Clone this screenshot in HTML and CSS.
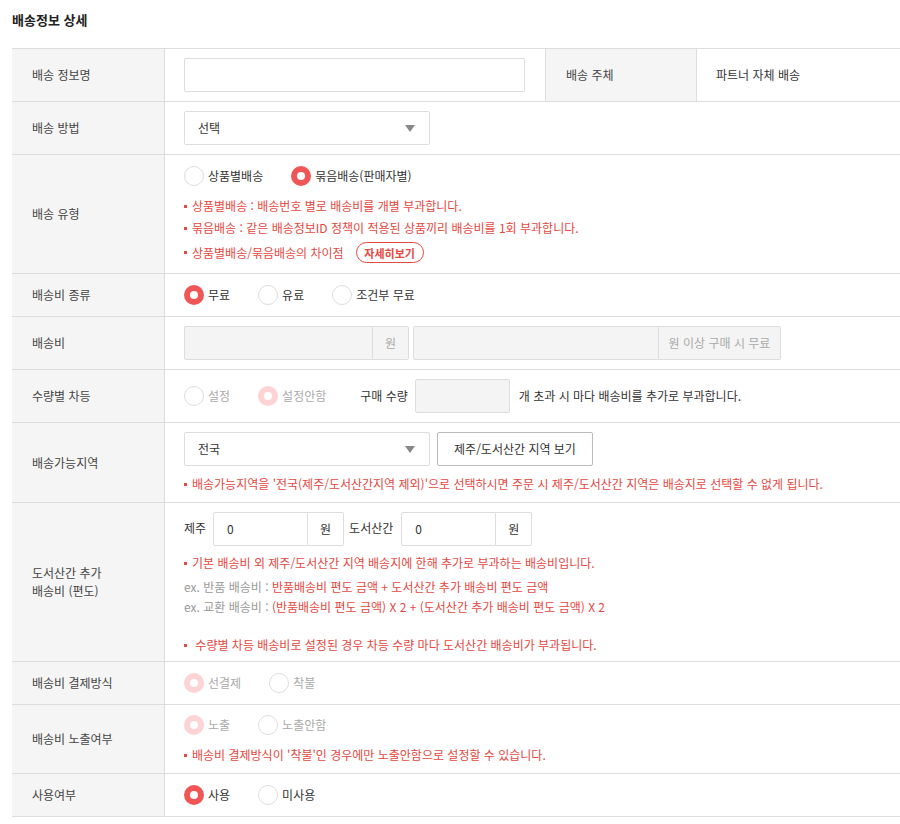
FILE: index.html
```html
<!DOCTYPE html>
<html lang="ko">
<head>
<meta charset="utf-8">
<title>배송정보 상세</title>
<link rel="stylesheet" href="styles.css">
</head>
<body>
<div class="page">
  <h2 class="title">배송정보 상세</h2>
  <div class="form">
    <!-- row 1 -->
    <div class="lbl">배송 정보명</div>
    <div class="val">
      <div class="input w-name"></div>
    </div>
    <div class="lbl lbl2">배송 주체</div>
    <div class="val text-only">파트너 자체 배송</div>

    <!-- row 2 -->
    <div class="lbl">배송 방법</div>
    <div class="val span">
      <div class="select w-select"><span>선택</span><i class="arrow"></i></div>
    </div>

    <!-- row 3 -->
    <div class="lbl">배송 유형</div>
    <div class="val span r-type">
      <div class="radios">
        <label class="opt"><span class="radio"></span>상품별배송</label>
        <label class="opt"><span class="radio on"></span>묶음배송(판매자별)</label>
      </div>
      <p class="note n1"><i class="dot"></i>상품별배송 : 배송번호 별로 배송비를 개별 부과합니다.</p>
      <p class="note n2"><i class="dot"></i>묶음배송 : 같은 배송정보ID 정책이 적용된 상품끼리 배송비를 1회 부과합니다.</p>
      <p class="note n3"><i class="dot"></i>상품별배송/묶음배송의 차이점 <span class="more">자세히보기</span></p>
    </div>

    <!-- row 4 -->
    <div class="lbl">배송비 종류</div>
    <div class="val span r-radio">
      <div class="radios">
        <label class="opt"><span class="radio on"></span>무료</label>
        <label class="opt"><span class="radio"></span>유료</label>
        <label class="opt"><span class="radio"></span>조건부 무료</label>
      </div>
    </div>

    <!-- row 5 -->
    <div class="lbl">배송비</div>
    <div class="val span">
      <div class="inline">
        <div class="group">
          <div class="input dis w-fee"></div><div class="addon dis w-won">원</div>
        </div>
        <div class="group">
          <div class="input dis w-fee2"></div><div class="addon dis w-free">원 이상 구매 시 무료</div>
        </div>
      </div>
    </div>

    <!-- row 6 -->
    <div class="lbl">수량별 차등</div>
    <div class="val span">
      <div class="inline">
        <label class="opt dim"><span class="radio"></span>설정</label>
        <label class="opt dim"><span class="radio on-dis"></span>설정안함</label>
        <span class="qty-label">구매 수량</span>
        <div class="input dis w-qty"></div>
        <span class="qty-text">개 초과 시 마다 배송비를 추가로 부과합니다.</span>
      </div>
    </div>

    <!-- row 7 -->
    <div class="lbl">배송가능지역</div>
    <div class="val span r-area">
      <div class="inline">
        <div class="select w-select"><span>전국</span><i class="arrow"></i></div>
        <div class="btn">제주/도서산간 지역 보기</div>
      </div>
      <p class="note n-area"><i class="dot"></i>배송가능지역을 '전국(제주/도서산간지역 제외)'으로 선택하시면 주문 시 제주/도서산간 지역은 배송지로 선택할 수 없게 됩니다.</p>
    </div>

    <!-- row 8 -->
    <div class="lbl">도서산간 추가<br>배송비 (편도)</div>
    <div class="val span r-island">
      <div class="inline">
        <span class="pre">제주</span>
        <div class="group">
          <div class="input w-isl"><span>0</span></div><div class="addon w-won">원</div>
        </div>
        <span class="pre pre2">도서산간</span>
        <div class="group">
          <div class="input w-isl"><span>0</span></div><div class="addon w-won">원</div>
        </div>
      </div>
      <p class="note n-isl"><i class="dot"></i>기본 배송비 외 제주/도서산간 지역 배송지에 한해 추가로 부과하는 배송비입니다.</p>
      <div class="ex">
        <p><span class="gray">ex. 반품 배송비 : </span>반품배송비 편도 금액 + 도서산간 추가 배송비 편도 금액</p>
        <p><span class="gray">ex. 교환 배송비 : </span>(반품배송비 편도 금액) X 2 + (도서산간 추가 배송비 편도 금액) X 2</p>
      </div>
      <p class="note n-last"><i class="dot"></i>&nbsp;수량별 차등 배송비로 설정된 경우 차등 수량 마다 도서산간 배송비가 부과됩니다.</p>
    </div>

    <!-- row 9 -->
    <div class="lbl">배송비 결제방식</div>
    <div class="val span r-radio">
      <div class="radios">
        <label class="opt dim"><span class="radio on-dis"></span>선결제</label>
        <label class="opt dim"><span class="radio"></span>착불</label>
      </div>
    </div>

    <!-- row 10 -->
    <div class="lbl">배송비 노출여부</div>
    <div class="val span r-expose">
      <div class="radios">
        <label class="opt dim"><span class="radio on-dis"></span>노출</label>
        <label class="opt dim"><span class="radio"></span>노출안함</label>
      </div>
      <p class="note n-exp"><i class="dot"></i>배송비 결제방식이 '착불'인 경우에만 노출안함으로 설정할 수 있습니다.</p>
    </div>

    <!-- row 11 -->
    <div class="lbl">사용여부</div>
    <div class="val span r-radio">
      <div class="radios">
        <label class="opt"><span class="radio on"></span>사용</label>
        <label class="opt"><span class="radio"></span>미사용</label>
      </div>
    </div>
  </div>
</div>
</body>
</html>
```

FILE: styles.css
```css
* { box-sizing: border-box; }

html, body {
  margin: 0;
  padding: 0;
  background: #fff;
}

body {
  font-family: "Noto Sans CJK KR", "Noto Sans", sans-serif;
  font-size: 12px;
  color: #333;
  line-height: 16px;
}

.page {
  padding: 0 0 0 12px;
}

.title {
  margin: 0;
  padding-top: 11px;
  height: 48px;
  font-size: 13px;
  line-height: 18px;
  font-weight: bold;
  color: #222;
}

.form {
  display: grid;
  grid-template-columns: 153px 380px 152px 1fr;
  border-top: 1px solid #ddd;
}

.lbl {
  display: flex;
  align-items: center;
  padding-left: 20px;
  background: #f5f5f5;
  border-right: 1px solid #ddd;
  border-bottom: 1px solid #ddd;
  color: #444;
  line-height: 18px;
}

.lbl2 {
  border-left: 1px solid #ddd;
}

.val {
  border-bottom: 1px solid #ddd;
  padding: 9px 19px;
  min-height: 53px;
}

.val.span {
  grid-column: span 3;
}

.val.text-only {
  display: flex;
  align-items: center;
}

/* generic controls */
.input {
  height: 34px;
  border: 1px solid #ddd;
  border-radius: 2px;
  background: #fff;
  display: flex;
  align-items: center;
  padding-left: 13px;
}

.input.dis,
.addon.dis {
  background: #f4f4f4;
}

.w-name { width: 341px; }
.w-fee { width: 189px; }
.w-fee2 { width: 246px; }
.w-qty { width: 95px; }
.w-isl { width: 95px; }
.w-won { width: 36px; }
.w-free { width: 122px; }
.w-select { width: 246px; }

.group {
  display: flex;
}

.group .input {
  border-radius: 2px 0 0 2px;
}

.addon {
  height: 34px;
  border: 1px solid #ddd;
  border-left: none;
  border-radius: 0 2px 2px 0;
  display: flex;
  align-items: center;
  justify-content: center;
  color: #333;
  background: #fff;
}

.addon.dis {
  color: #aaa;
}

.select {
  height: 34px;
  border: 1px solid #ddd;
  border-radius: 2px;
  display: flex;
  align-items: center;
  justify-content: space-between;
  padding: 0 14px 0 13px;
  color: #333;
}

.arrow {
  width: 0;
  height: 0;
  border-left: 5px solid transparent;
  border-right: 5px solid transparent;
  border-top: 7px solid #888;
}

.btn {
  height: 34px;
  width: 156px;
  border: 1px solid #bbb;
  border-radius: 2px;
  display: flex;
  align-items: center;
  justify-content: center;
  color: #333;
  margin-left: 7px;
}

.inline {
  display: flex;
  align-items: center;
}

.inline .group + .group {
  margin-left: 4px;
}

/* radios */
.radios {
  display: flex;
  align-items: center;
  height: 20px;
}

.opt {
  display: flex;
  align-items: center;
  margin-right: 28px;
  color: #333;
  line-height: 20px;
}

.opt.dim {
  color: #aaa;
}

.radio {
  width: 20px;
  height: 20px;
  border-radius: 50%;
  border: 1px solid #ddd;
  background: #fff;
  margin-right: 4px;
  position: relative;
  flex: none;
}

.radio.on {
  border: none;
  background: #f05656;
}

.radio.on-dis {
  border: none;
  background: #fdd3d3;
}

.radio.on::after,
.radio.on-dis::after {
  content: "";
  position: absolute;
  left: 6px;
  top: 6px;
  width: 8px;
  height: 8px;
  border-radius: 50%;
  background: #fff;
}

/* notes */
.note {
  margin: 0;
  color: #e5483f;
  line-height: 16px;
  display: flex;
  align-items: center;
}

.dot {
  display: inline-block;
  width: 3px;
  height: 3px;
  background: #e5483f;
  margin-right: 5px;
  flex: none;
}

.more {
  display: inline-flex;
  align-items: center;
  justify-content: center;
  height: 21px;
  width: 68px;
  border: 1px solid #e5483f;
  border-radius: 11px;
  font-size: 11px;
  font-weight: bold;
  color: #e5483f;
  margin-left: 12px;
}

/* row specifics */
.r-type {
  padding-top: 11px;
  padding-bottom: 10px;
}

.r-type .n1 { margin-top: 12px; }
.r-type .n2 { margin-top: 6px; }
.r-type .n3 { margin-top: 6px; height: 21px; }

.r-radio {
  padding-top: 11px;
  padding-bottom: 11px;
  min-height: 43px;
}

.qty-label {
  margin-left: 6px;
  color: #333;
}

.w-qty {
  margin-left: 7px;
}

.qty-text {
  margin-left: 9px;
  color: #333;
}

.r-area {
  padding-bottom: 10px;
}

.r-area .n-area {
  margin-top: 10px;
}

.r-island {
  padding-bottom: 8px;
}

.r-island .pre {
  margin-right: 7px;
  line-height: 16px;
  align-self: flex-start;
  margin-top: 8px;
  color: #333;
}

.r-island .pre2 {
  margin-left: 5px;
  margin-right: 8px;
}

.r-island .n-isl {
  margin-top: 9px;
}

.ex {
  margin-top: 6px;
  color: #e5483f;
}

.ex p {
  margin: 0;
  line-height: 20px;
}

.gray {
  color: #999;
}

.r-island .n-last {
  margin-top: 20px;
}

.r-expose {
  padding-top: 10px;
  padding-bottom: 10px;
}

.r-expose .n-exp {
  margin-top: 12px;
}
```
